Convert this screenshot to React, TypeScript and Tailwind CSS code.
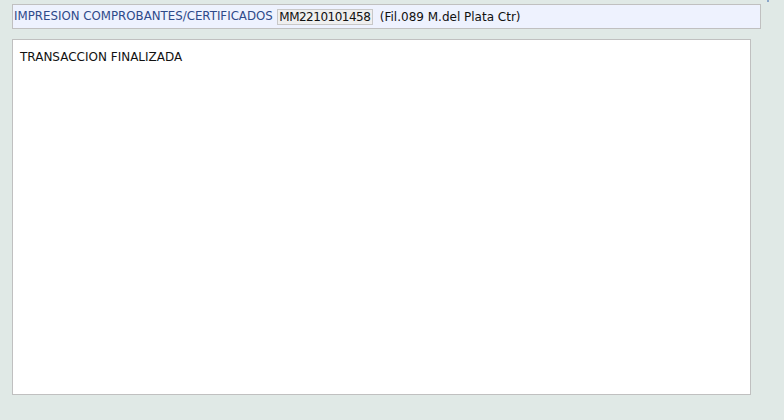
export default function App() {
  return (
    <div className="relative h-[420px] w-[784px] overflow-hidden bg-[#e0e9e6] font-['DejaVu_Sans',sans-serif] text-[12px]">
      <span className="absolute left-[767px] top-0 h-[2px] w-[2px] bg-[#8aa6c8]" />
      <div className="pl-[12px] pt-[4px]">
        <div className="flex h-[25px] w-[749px] items-center border border-[#c0c0c0] bg-[#eef2fe] pl-[1px]">
          <span className="text-[11.8px] text-[#2e4a8a]">IMPRESION COMPROBANTES/CERTIFICADOS</span>
          <span className="ml-[4px] flex h-[16px] w-[96px] items-center justify-center border border-[#c8c8c8] bg-[#efefef] tracking-[-0.5px] text-[#111]">
            MM2210101458
          </span>
          <span className="ml-[7px] text-[#111]">(Fil.089 M.del Plata Ctr)</span>
        </div>
        <div className="mt-[10px] h-[356px] w-[739px] border border-[#c0c0c0] bg-white px-[7px] pt-[8px]">
          <p className="text-[#111]">TRANSACCION FINALIZADA</p>
        </div>
      </div>
    </div>
  );
}
